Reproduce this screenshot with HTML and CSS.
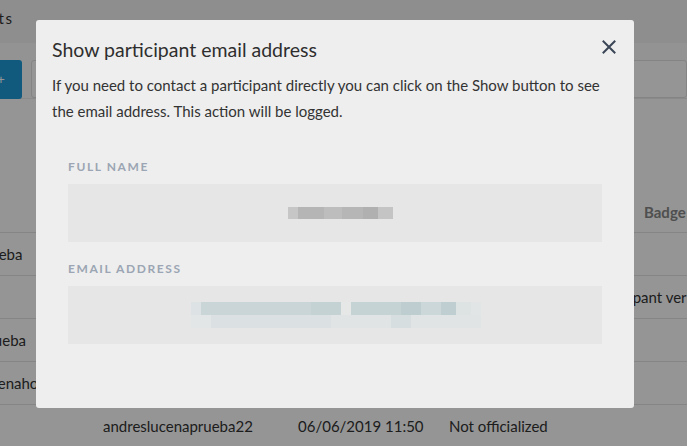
FILE: index.html
```html
<!DOCTYPE html>
<html lang="en">
<head>
    <meta charset="UTF-8">
    <meta name="viewport" content="width=device-width, initial-scale=1.0">
    <title>Participants</title>
    <link rel="stylesheet" href="styles.css">
</head>
<body>
    <div class="page">
        <div class="page-header">Participants</div>
        <div class="toolbar">
            <button class="btn-primary">+</button>
            <div class="search"></div>
        </div>
        <div class="participants">
            <div class="row head">
                <div class="cell">Name</div><div class="cell">Nickname</div><div class="cell">Created</div><div class="cell">Status</div><div class="cell">Badge</div>
            </div>
            <div class="row">
                <div class="cell name">andreslucenaprueba</div><div class="cell"></div><div class="cell"></div><div class="cell"></div><div class="cell"></div>
            </div>
            <div class="row">
                <div class="cell"></div><div class="cell"></div><div class="cell"></div><div class="cell"></div><div class="cell verified">Participant verified</div>
            </div>
            <div class="row">
                <div class="cell name">andres.lucenaprueba</div><div class="cell"></div><div class="cell"></div><div class="cell"></div><div class="cell"></div>
            </div>
            <div class="row">
                <div class="cell name short">andreslucenahotmail</div><div class="cell"></div><div class="cell"></div><div class="cell"></div><div class="cell"></div>
            </div>
            <div class="row">
                <div class="cell"></div><div class="cell">andreslucenaprueba22</div><div class="cell">06/06/2019 11:50</div><div class="cell">Not officialized</div><div class="cell"></div>
            </div>
        </div>
    </div>

    <div class="backdrop"></div>

    <div class="modal">
        <div class="modal-head">
            <h2>Show participant email address</h2>
            <button class="close" aria-label="Close">
                <svg width="14" height="14" viewBox="0 0 14 14"><path d="M1.5 1.5L12.5 12.5M12.5 1.5L1.5 12.5" stroke="#3a4556" stroke-width="2" stroke-linecap="square"/></svg>
            </button>
        </div>
        <p>If you need to contact a participant directly you can click on the Show button to see the email address. This action will be logged.</p>

        <div class="field first">
            <div class="field-label">Full name</div>
            <div class="field-value">
                <span class="blur blur-name"></span>
            </div>
        </div>

        <div class="field">
            <div class="field-label">Email address</div>
            <div class="field-value">
                <span class="blur blur-email">
                    <span class="row-top"></span>
                    <span class="row-bottom"></span>
                </span>
            </div>
        </div>
    </div>
</body>
</html>
```

FILE: styles.css
```css
body {
    margin: 0;
    font-family: Lato, "Open Sans", sans-serif;
    color: #333;
    background: #fff;
    overflow: hidden;
}
.page {
    width: 687px;
    height: 446px;
    overflow: hidden;
}
.page-header {
    height: 43px;
    background: #f4f4f4;
    font-size: 15px;
    letter-spacing: 1.5px;
    line-height: 36px;
    margin-left: -82px;
}
.toolbar {
    display: flex;
    gap: 9px;
    padding: 17px 0 0;
    height: 38px;
    border-bottom: 1px solid #ececec;
    background: #fbfbfb;
    margin-left: -20px;
}
.btn-primary {
    width: 42px;
    height: 39px;
    border: none;
    border-radius: 3px;
    background: #1e9ad8;
    color: #fff;
}
.search {
    flex: 1;
    border: 1px solid #e2e2e2;
    border-radius: 3px;
    background: #fff;
}
.participants {
    font-size: 15px;
    margin-left: -120px;
    width: 870px;
}
.row {
    display: grid;
    grid-template-columns: 223px 195px 151px 195px 1fr;
    align-items: center;
    height: 42px;
    border-bottom: 1px solid #e4e4e4;
    white-space: nowrap;
}
.row.head {
    height: 133px;
    align-items: end;
    font-weight: 700;
    color: #888;
}
.row.head .cell {
    padding-bottom: 11px;
}
.name {
    padding-left: 10px;
}
.name.short {
    padding-left: 55px;
}
.verified {
    margin-left: -53px;
}

.backdrop {
    position: fixed;
    inset: 0;
    background: rgba(0, 0, 0, 0.415);
}

.modal {
    position: fixed;
    top: 20px;
    left: 36px;
    width: 598px;
    height: 388px;
    box-sizing: border-box;
    padding: 16px 16px 0;
    background: #eeeeee;
    border-radius: 3px;
}
.modal-head {
    display: flex;
    justify-content: space-between;
    align-items: center;
}
.modal h2 {
    margin: 0;
    font-size: 19.5px;
    font-weight: 400;
    line-height: 28px;
    color: #2e2e2e;
}
.close {
    border: none;
    background: none;
    padding: 0;
    width: 14px;
    height: 14px;
    margin-right: 2px;
    margin-top: -6px;
    cursor: pointer;
}
.close svg {
    display: block;
}
.modal p {
    margin: 8px 0 0;
    font-size: 15px;
    line-height: 26px;
    color: #333;
}
.field {
    padding: 0 16px;
    margin-top: 18px;
}
.field.first {
    margin-top: 34px;
}
.field-label {
    font-size: 12px;
    line-height: 18px;
    text-transform: uppercase;
    letter-spacing: 1.6px;
    font-weight: 700;
    color: #9ba5b3;
}
.field-value {
    margin-top: 8px;
    height: 58px;
    background: #e6e6e6;
    display: flex;
    justify-content: center;
    align-items: center;
}
.blur {
    display: block;
}
.blur-name {
    width: 105px;
    height: 12px;
    margin-left: 11px;
    background: linear-gradient(90deg,
        #c6c6c6 0 10px, #b5b5b5 10px 36px, #bdbdbd 36px 54px,
        #b6b6b6 54px 75px, #b0b0b0 75px 90px, #c4c4c4 90px 105px);
}
.blur-email {
    width: 290px;
    margin-left: 1px;
}
.row-top, .row-bottom {
    display: block;
    height: 13px;
}
.row-top {
    background: linear-gradient(90deg,
        #dde3e4 0 10px, #c9d5d7 10px 120px, #c4d2d4 120px 150px,
        #e6e7e7 150px 160px, #c6d3d5 160px 210px, #bdcdd0 210px 230px,
        #cbd7d8 230px 250px, #bfcfd1 250px 265px, #dde2e3 265px 280px,
        #e2e5e5 280px 290px);
}
.row-bottom {
    background: linear-gradient(90deg,
        #e3e6e6 0 20px, #dbe1e2 20px 140px, #e0e4e4 140px 200px,
        #d6dee0 200px 220px, #e1e4e4 220px 290px);
}
```
